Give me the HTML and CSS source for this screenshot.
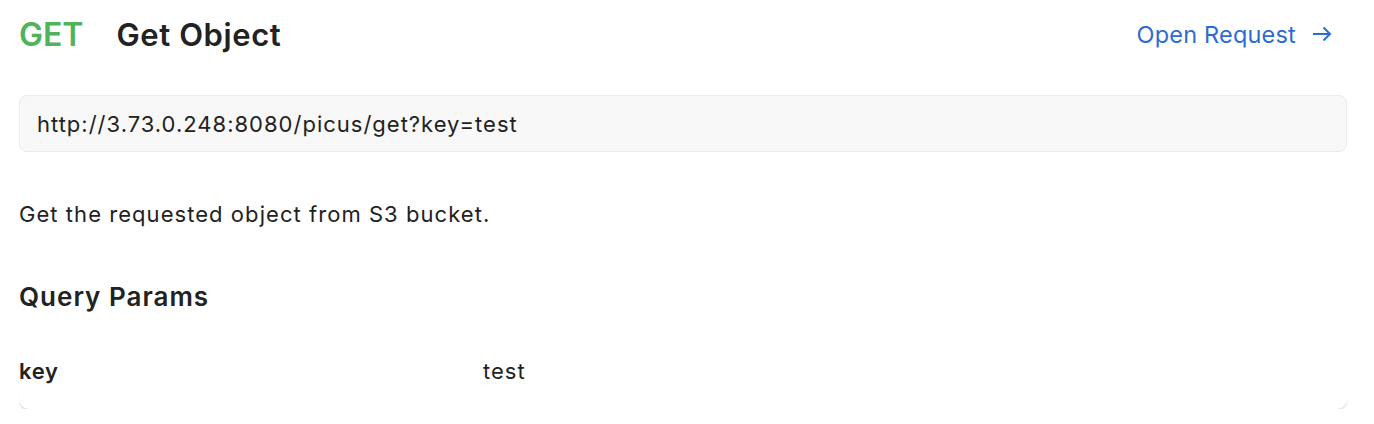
FILE: index.html
```html
<!DOCTYPE html>
<html>
<head>
<meta charset="utf-8">
<link rel="stylesheet" href="styles.css">
</head>
<body>
<div class="page">
  <div class="header">
    <div class="title-group">
      <span class="method">GET</span>
      <span class="title">Get Object</span>
    </div>
    <a class="open-link" href="#">Open Request
      <svg class="arrow" width="20" height="16" viewBox="0 0 20 16"><path d="M1 8H18M11.5 1.5L18 8L11.5 14.5" fill="none" stroke="currentColor" stroke-width="2"/></svg>
    </a>
  </div>
  <div class="url-box">http://3.73.0.248:8080/picus/get?key=test</div>
  <p class="desc">Get the requested object from S3 bucket.</p>
  <h2 class="section">Query Params</h2>
  <div class="params">
    <div class="param-row">
      <div class="param-key">key</div>
      <div class="param-val">test</div>
    </div>
  </div>
</div>
</body>
</html>
```
FILE: styles.css
```css
html, body { margin: 0; padding: 0; background: #fff; }
body { font-family: Inter, "Noto Sans", sans-serif; color: #212121; }
.page { padding: 14px 27px 0 19px; }
.header { display: flex; justify-content: space-between; align-items: center; height: 40px; }
.title-group { display: flex; align-items: baseline; gap: 33px; }
.method { font-size: 32px; font-weight: 600; color: #4fb35a; }
.title { font-size: 31px; font-weight: 600; color: #222; letter-spacing: 0.6px; }
.open-link { display: flex; align-items: center; gap: 16px; color: #2d6bd4; text-decoration: none; font-size: 23.5px; letter-spacing: 0.2px; padding-right: 15px; }
.arrow { display: block; }
.url-box { margin-top: 41px; height: 57px; box-sizing: border-box; border: 1.5px solid #ebebeb; border-radius: 8px; background: #f8f8f8; display: flex; align-items: center; padding-left: 17px; font-size: 22px; letter-spacing: 1px; color: #222; }
.desc { margin: 47px 0 0; font-size: 22px; letter-spacing: 1.05px; line-height: 30px; color: #222; }
.section { margin: 51px 0 0; font-size: 26px; font-weight: 600; letter-spacing: 1px; line-height: 34px; color: #222; }
.params { margin-top: 23px; border-radius: 0 0 10px 10px; box-shadow: 0 1.5px 1px #e2e2e2; }
.param-row { display: flex; align-items: center; height: 72px; box-sizing: border-box; padding-bottom: 4px; font-size: 22px; }
.param-key { width: 464px; font-weight: 600; color: #222; letter-spacing: 0.7px; }
.param-val { color: #222; letter-spacing: 1px; }
```
